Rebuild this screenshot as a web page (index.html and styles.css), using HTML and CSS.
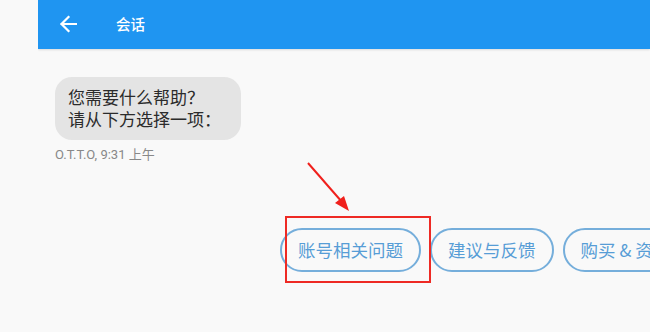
FILE: index.html
```html
<!DOCTYPE html>
<html lang="zh">
<head>
<meta charset="utf-8">
<link rel="stylesheet" href="styles.css">
</head>
<body>
<div class="screen">
  <div class="side"></div>
  <div class="main">
    <header class="bar">
      <svg class="back" width="18" height="18" viewBox="0 0 18 18"><path d="M17 9H2.5M9.5 2L2.5 9l7 7" fill="none" stroke="#fff" stroke-width="2.2" stroke-linecap="square"/></svg>
      <span class="title">会话</span>
    </header>
    <div class="chat">
      <div class="bubble">您需要什么帮助？<br>请从下方选择一项：</div>
      <div class="meta">O.T.T.O, 9:31 上午</div>
      <div class="options">
        <span class="opt">账号相关问题</span>
        <span class="opt">建议与反馈</span>
        <span class="opt">购买 &amp; 资费问题</span>
      </div>
    </div>
  </div>
  <div class="mark"></div>
  <svg class="pointer" width="70" height="70" viewBox="0 0 70 70"><path d="M10 4 L44 43" stroke="#f0201c" stroke-width="2" fill="none"/><path d="M51 52 L37 44 L46 37 Z" fill="#f0201c"/></svg>
</div>
</body>
</html>
```
FILE: styles.css
```css
html, body { margin: 0; padding: 0; }
body {
  width: 650px; height: 332px; overflow: hidden;
  background: #f9f9f9;
  font-family: "Noto Sans CJK SC", "Noto Sans", sans-serif;
}
.screen { position: relative; display: flex; width: 650px; height: 332px; }
.side { width: 38px; flex: none; }
.main { flex: 1; min-width: 0; overflow: hidden; }
.bar {
  height: 49px; background: #1f95f1;
  display: flex; align-items: center;
  box-shadow: 0 1px 2px rgba(0,0,0,0.12);
}
.back { margin-left: 21px; margin-top: -2px; }
.title { margin-left: 39px; color: #fff; font-size: 14.5px; font-weight: 500; margin-top: -2px; }
.chat { padding: 28px 0 0 17px; }
.bubble {
  display: inline-block;
  background: #e4e4e4; color: #2b2b2b;
  border-radius: 17px;
  padding: 9px 20px 10px 13px;
  font-size: 17px; line-height: 22px;
}
.meta {
  font-family: Roboto, "Noto Sans CJK SC", sans-serif;
  color: #888; font-size: 13px; line-height: 16px; margin-top: 7px;
}
.options { margin-top: 65px; margin-left: 225px; display: flex; gap: 9px; white-space: nowrap; }
.opt {
  flex: none;
  border: 2px solid #75aedb; border-radius: 22px;
  height: 40px; line-height: 40px;
  padding: 0 16px;
  color: #579dd6; font-size: 17.5px;
}
.mark {
  position: absolute; left: 285px; top: 216px;
  width: 142px; height: 63px;
  border: 2px solid #ee2a24;
}
.pointer { position: absolute; left: 298px; top: 159px; }
```
